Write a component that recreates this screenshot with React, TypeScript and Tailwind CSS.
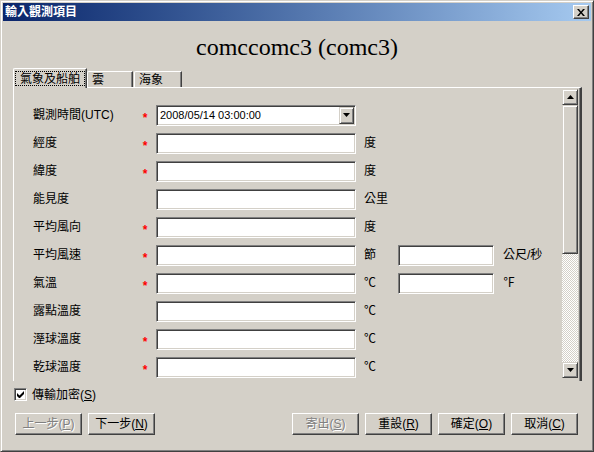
import type { ReactNode } from "react";

const FONT = { fontFamily: '"Liberation Sans", "Noto Sans CJK TC", sans-serif' };

const sunken =
  "bg-white border border-t-[#808080] border-l-[#808080] border-b-white border-r-white shadow-[inset_1px_1px_0_#404040,inset_-1px_-1px_0_#D4D0C8]";
const raised =
  "bg-[#D4D0C8] border border-t-[#D4D0C8] border-l-[#D4D0C8] border-b-[#404040] border-r-[#404040] shadow-[inset_1px_1px_0_#fff,inset_-1px_-1px_0_#808080]";
const btnRaised =
  "bg-[#D4D0C8] border border-t-white border-l-white border-b-[#404040] border-r-[#404040] shadow-[inset_-1px_-1px_0_#808080]";

type Row = {
  label: string;
  req?: boolean;
  date?: boolean;
  unit?: string;
  unit2?: string;
};

const rows: Row[] = [
  { label: "觀測時間(UTC)", req: true, date: true },
  { label: "經度", req: true, unit: "度" },
  { label: "緯度", req: true, unit: "度" },
  { label: "能見度", unit: "公里" },
  { label: "平均風向", req: true, unit: "度" },
  { label: "平均風速", req: true, unit: "節", unit2: "公尺/秒" },
  { label: "氣溫", req: true, unit: "℃", unit2: "℉" },
  { label: "露點溫度", unit: "℃" },
  { label: "溼球溫度", req: true, unit: "℃" },
  { label: "乾球溫度", req: true, unit: "℃" },
];

function Tri({ down }: { down?: boolean }) {
  return (
    <svg width="7" height="4" viewBox="0 0 7 4">
      <polygon points={down ? "0,0 7,0 3.5,4" : "0,4 7,4 3.5,0"} fill="#000" />
    </svg>
  );
}

function Btn({ children, disabled }: { children: ReactNode; disabled?: boolean }) {
  return (
    <button
      className={`${btnRaised} w-[67px] h-[22px] flex items-center justify-center text-[12px] leading-[14px] ${
        disabled ? "text-[#808080] [text-shadow:1px_1px_0_#fff]" : "text-black"
      }`}
    >
      {children}
    </button>
  );
}

function FormRow({ row }: { row: Row }) {
  return (
    <div className="flex items-center h-[28px] text-[12px] leading-[14px] text-black">
      <div className="w-[106px]">{row.label}</div>
      <div className="w-[12px] text-center text-[#FF0000] font-bold translate-y-[3px]">{row.req ? "*" : ""}</div>
      {row.date ? (
        <div className={`${sunken} ml-[5px] w-[200px] h-[21px] p-px flex items-stretch`}>
          <div className="flex-1 pl-[2px] flex items-center text-[11px]">2008/05/14 03:00:00</div>
          <div className={`${raised} w-[15px] flex items-center justify-center`}>
            <Tri down />
          </div>
        </div>
      ) : (
        <div className={`${sunken} ml-[5px] w-[200px] h-[21px]`} />
      )}
      {row.unit ? <div className="ml-[8px] w-[34px]">{row.unit}</div> : null}
      {row.unit2 ? (
        <>
          <div className={`${sunken} w-[96px] h-[21px]`} />
          <div className="ml-[9px]">{row.unit2}</div>
        </>
      ) : null}
    </div>
  );
}

export default function App() {
  return (
    <div
      style={FONT}
      className="w-[594px] h-[452px] bg-[#D4D0C8] border border-t-[#D4D0C8] border-l-[#D4D0C8] border-b-[#404040] border-r-[#404040] shadow-[inset_1px_1px_0_#fff,inset_-1px_-1px_0_#808080] p-[2px] overflow-hidden"
    >
      <div className="h-[18px] bg-linear-to-r from-[#0A246A] to-[#A6CAF0] flex items-center justify-between">
        <span className="pl-[2px] text-white font-bold text-[12px] leading-[14px]">輸入觀測項目</span>
        <div className={`${btnRaised} w-[16px] h-[14px] mr-[2px] flex items-center justify-center`}>
          <svg width="8" height="7" viewBox="0 0 8 7">
            <path d="M0 0h2l2 2.5L6 0h2L5 3.5 8 7H6L4 4.5 2 7H0l3-3.5z" fill="#000" />
          </svg>
        </div>
      </div>

      <div
        className="h-[47px] pt-[13px] text-center text-[24px] leading-[27px] text-black"
        style={{ fontFamily: '"Liberation Serif", serif' }}
      >
        comccomc3 (comc3)
      </div>

      <div className="flex items-end h-[19px] ml-[10px] text-[12px] leading-[14px]">
        <div className="relative z-10 -mb-px h-[20px] w-[74px] bg-[#D4D0C8] border-t border-l border-t-white border-l-white rounded-tl-[2px] border-r border-r-[#404040] shadow-[inset_-1px_0_0_#808080] pl-[1px] pt-[2px]">
          <div className="border border-dotted border-black h-[15px] w-[70px] flex items-center justify-center">
            氣象及船舶
          </div>
        </div>
        <div className="h-[16px] w-[46px] border-t border-l border-t-white border-l-white rounded-tl-[2px] border-r border-r-[#404040] shadow-[inset_-1px_0_0_#808080] pl-[4px] flex items-center">
          雲
        </div>
        <div className="ml-px h-[16px] w-[48px] border-t border-l border-t-white border-l-white rounded-tl-[2px] border-r border-r-[#404040] shadow-[inset_-1px_0_0_#808080] pl-[4px] flex items-center">
          海象
        </div>
      </div>

      <div className="ml-[10px] w-[569px] h-[294px] border-t border-l border-t-white border-l-white border-r-2 border-r-[#404040] shadow-[inset_-1px_0_0_#808080] flex overflow-hidden">
        <div className="flex-1 pt-[13px] pl-[19px]">
          {rows.map((r) => (
            <FormRow key={r.label} row={r} />
          ))}
        </div>
        <div className="w-[16px] mt-[1px] mr-[2px] h-[289px] flex flex-col">
          <div className={`${raised} h-[16px] flex items-center justify-center`}>
            <Tri />
          </div>
          <div className={`${raised} h-[149px]`} />
          <div className="flex-1 bg-[repeating-conic-gradient(#fff_0_25%,#D4D0C8_0_50%)] bg-[length:2px_2px]" />
          <div className={`${raised} h-[16px] flex items-center justify-center`}>
            <Tri down />
          </div>
        </div>
      </div>

      <div className="mt-[7px] ml-[11px] flex items-center h-[13px] text-[12px] leading-[14px] text-black">
        <div className={`${sunken} w-[13px] h-[13px] flex items-center justify-center`}>
          <svg width="7" height="7" viewBox="0 0 7 7">
            <path d="M0 2v3l2 2h1l4-4V0L2.5 4.5z" fill="#000" />
          </svg>
        </div>
        <span className="ml-[5px]">
          傳輸加密(<span className="underline">S</span>)
        </span>
      </div>

      <div className="mt-[12px] ml-[12px] mr-[13px] flex">
        <Btn disabled>
          上一步(<span className="underline">P</span>)
        </Btn>
        <div className="ml-[6px]">
          <Btn>
            下一步(<span className="underline">N</span>)
          </Btn>
        </div>
        <div className="flex-1" />
        <div className="flex gap-[6px]">
          <Btn disabled>
            寄出(<span className="underline">S</span>)
          </Btn>
          <Btn>
            重設(<span className="underline">R</span>)
          </Btn>
          <Btn>
            確定(<span className="underline">O</span>)
          </Btn>
          <Btn>
            取消(<span className="underline">C</span>)
          </Btn>
        </div>
      </div>
    </div>
  );
}
